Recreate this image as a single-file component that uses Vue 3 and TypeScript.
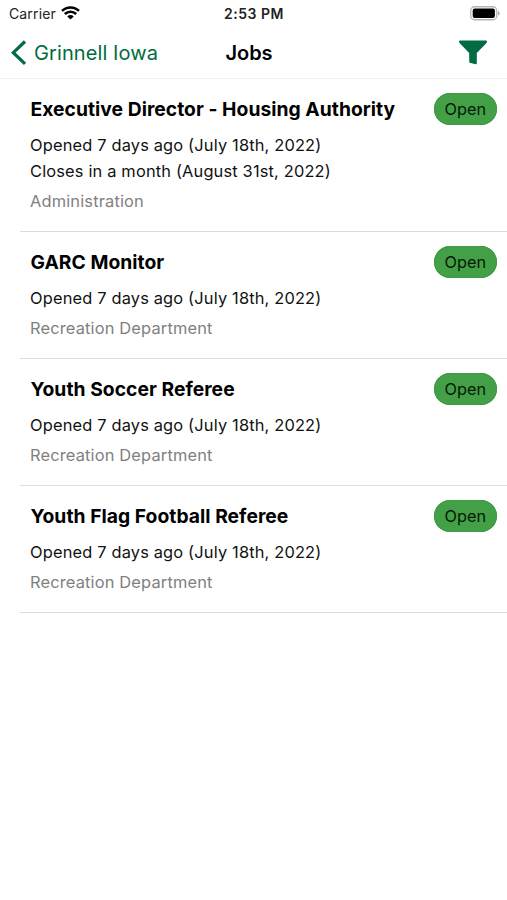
<script setup lang="ts">
interface Job {
  title: string
  dates: string[]
  department: string
}

const jobs: Job[] = [
  {
    title: 'Executive Director - Housing Authority',
    dates: ['Opened 7 days ago (July 18th, 2022)', 'Closes in a month (August 31st, 2022)'],
    department: 'Administration',
  },
  { title: 'GARC Monitor', dates: ['Opened 7 days ago (July 18th, 2022)'], department: 'Recreation Department' },
  { title: 'Youth Soccer Referee', dates: ['Opened 7 days ago (July 18th, 2022)'], department: 'Recreation Department' },
  { title: 'Youth Flag Football Referee', dates: ['Opened 7 days ago (July 18th, 2022)'], department: 'Recreation Department' },
]
</script>

<template>
  <div class="screen">
    <div class="status">
      <div class="carrier">
        <span class="carrier-name">Carrier</span>
        <svg class="wifi" width="19" height="14" viewBox="0 0 19 14" fill="none" stroke="#000" stroke-width="2.5">
          <path d="M1 4.9C5.7 .2 13.3 .2 18 4.9" />
          <path d="M3.8 8C7 4.9 12 4.9 15.2 8" />
          <path d="M6.3 10.4C8.1 8.6 10.9 8.6 12.7 10.4L9.5 13.6Z" fill="#000" stroke="none" />
        </svg>
      </div>
      <span class="time">2:53 PM</span>
      <svg class="battery" width="30" height="15" viewBox="0 0 30 15">
        <rect x=".75" y=".75" width="26" height="13" rx="3.8" fill="#fff" stroke="#b5b5b5" stroke-width="1.3" />
        <rect x="2.7" y="2.6" width="22.2" height="9.4" rx="2" fill="#000" />
        <path d="M28 4.9c2.2 .9 2.2 3.8 0 4.7z" fill="#aaa" />
      </svg>
    </div>
    <header class="nav">
      <div class="back">
        <svg width="16" height="26" viewBox="0 0 16 26" fill="none" stroke="#036b41" stroke-width="3.2">
          <path d="M14 1.5L2.3 12.7L14 23.9" />
        </svg>
        <span class="back-label">Grinnell Iowa</span>
      </div>
      <h1 class="heading">Jobs</h1>
      <svg class="filter" width="28" height="25" viewBox="0 0 28 25" fill="#036b41">
        <path d="M1 .5H27Q28 .5 28 1.7Q27.8 2.7 27 3.5L17.8 13V23Q17.8 24.5 16.5 24.2L10.9 22.7Q10.2 22.4 10.2 21.5V13L1 3.5Q.2 2.7 0 1.7Q0 .5 1 .5Z" />
      </svg>
    </header>
    <main>
      <article v-for="job in jobs" :key="job.title" class="job">
        <div class="row">
          <h2 class="title">{{ job.title }}</h2>
          <span class="badge">Open</span>
        </div>
        <p v-for="date in job.dates" :key="date" class="date">{{ date }}</p>
        <p class="department">{{ job.department }}</p>
      </article>
    </main>
  </div>
</template>

<style>
body { background: #fff; }
</style>

<style scoped>
.screen { width: 507px; height: 900px; overflow: hidden; background: #fff; color: #000; font-family: Inter, sans-serif; }
.status { height: 27px; display: grid; grid-template-columns: 1fr auto 1fr; align-items: center; padding: 0 7px 0 9px; box-sizing: border-box; }
.carrier { display: flex; align-items: center; gap: 5px; font-size: 14px; letter-spacing: .14px; color: #222; }
.wifi { margin-top: -2px; }
.time { margin-left: -1px; font-size: 14px; font-weight: 600; letter-spacing: .5px; color: #222; }
.battery { justify-self: end; }
.nav { height: 52px; display: grid; grid-template-columns: 1fr auto 1fr; align-items: center; padding: 0 20px 0 11px; border-bottom: 1px solid #f1f1f1; box-sizing: border-box; }
.back { display: flex; align-items: center; gap: 7px; color: #036b41; font-size: 20px; letter-spacing: .1px; }
.heading { margin: 0; font-size: 20px; font-weight: 600; letter-spacing: -.1px; }
.filter { justify-self: end; }
.job { margin-left: 20px; padding: 14px 10px 16px 10.5px; border-bottom: 1px solid #dcdcdc; }
.row { display: flex; justify-content: space-between; align-items: center; margin-bottom: 7px; }
.title { margin: 0; padding-top: 1px; font-size: 19.3px; font-weight: 700; line-height: 31px; letter-spacing: .03px; white-space: nowrap; }
.badge { width: 63.5px; height: 32px; box-sizing: border-box; border-radius: 16px; background: #43a047; box-shadow: inset 0 0 0 1px #3e9a43; font-size: 16.3px; line-height: 32px; text-align: center; color: #031a05; }
.date { margin: 0 0 0 -.5px; font-size: 16.4px; line-height: 26px; letter-spacing: .17px; white-space: nowrap; color: #111; }
.department { margin: 4px 0 0 -.5px; padding-bottom: 1px; font-size: 16.4px; line-height: 26px; letter-spacing: .17px; color: #808080; }
</style>
